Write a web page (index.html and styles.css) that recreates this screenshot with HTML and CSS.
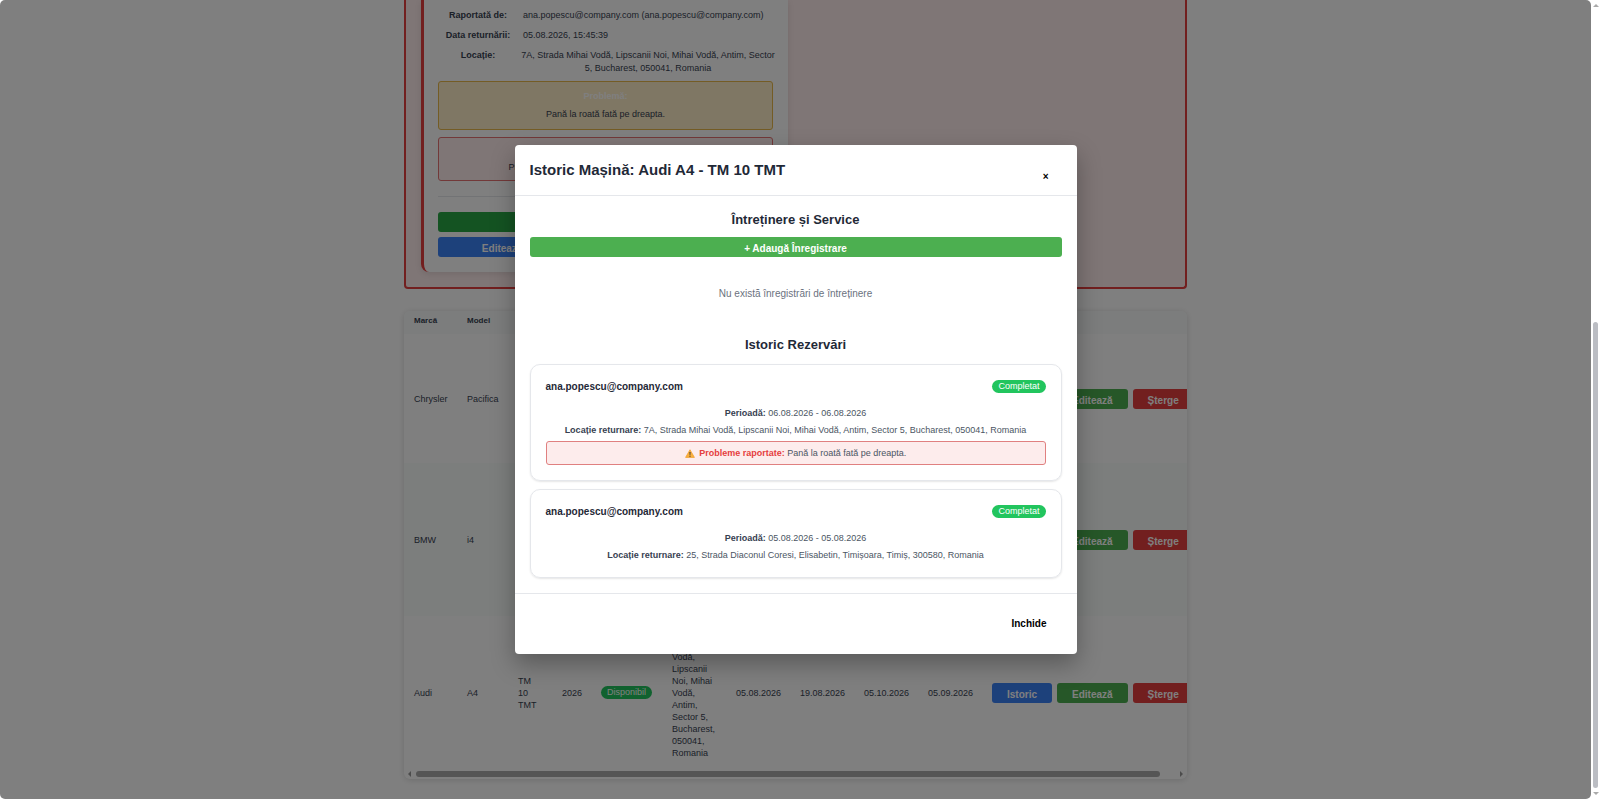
FILE: index.html
```
<!DOCTYPE html>
<html lang="ro">
<head>
    <meta charset="UTF-8">
    <meta name="viewport" content="width=device-width, initial-scale=1.0">
    <title>Istoric Mașină</title>
    <link rel="stylesheet" href="styles.css">
</head>
<body>
    <div class="page">
        <main class="container">
            <section class="problems-section">
                <article class="problem-card">
                    <dl class="problem-details">
                        <dt>Raportată de:</dt>
                        <dd>ana.popescu@company.com (ana.popescu@company.com)</dd>
                        <dt>Data returnării:</dt>
                        <dd>05.08.2026, 15:45:39</dd>
                        <dt>Locație:</dt>
                        <dd class="centered">7A, Strada Mihai Vodă, Lipscanii Noi, Mihai Vodă, Antim, Sector 5, Bucharest, 050041, Romania</dd>
                    </dl>
                    <div class="note note-warning">
                        <strong>Problemă:</strong>
                        <p>Pană la roată fată pe dreapta.</p>
                    </div>
                    <div class="note note-danger">
                        <p>Problemele raportate nu au fost încă soluționate.</p>
                    </div>
                    <div class="problem-actions">
                        <button class="btn btn-success" type="button">Rezolvat</button>
                        <button class="btn btn-primary" type="button">Editează Mașina</button>
                        <button class="btn btn-primary" type="button">Istoric</button>
                    </div>
                </article>
            </section>

            <div class="table-card">
                <div class="table-scroll">
                    <table class="cars-table">
                        <colgroup>
                            <col class="col-brand">
                            <col class="col-model">
                            <col class="col-plate">
                            <col class="col-year">
                            <col class="col-status">
                            <col class="col-location">
                            <col class="col-date">
                            <col class="col-date">
                            <col class="col-date">
                            <col class="col-date">
                            <col class="col-actions">
                        </colgroup>
                        <thead>
                            <tr>
                                <th>Marcă</th>
                                <th>Model</th>
                                <th>Număr</th>
                                <th>An</th>
                                <th>Status</th>
                                <th>Locație</th>
                                <th>Revizie</th>
                                <th>ITP</th>
                                <th>RCA</th>
                                <th></th>
                                <th></th>
                            </tr>
                        </thead>
                        <tbody>
                            <tr class="row-short">
                                <td>Chrysler</td>
                                <td>Pacifica</td>
                                <td></td>
                                <td></td>
                                <td></td>
                                <td></td>
                                <td></td>
                                <td></td>
                                <td></td>
                                <td></td>
                                <td>
                                    <div class="row-actions">
                                        <button class="btn btn-primary" type="button">Istoric</button>
                                        <button class="btn btn-edit" type="button">Editează</button>
                                        <button class="btn btn-danger" type="button">Șterge</button>
                                    </div>
                                </td>
                            </tr>
                            <tr class="row-tall">
                                <td>BMW</td>
                                <td>i4</td>
                                <td></td>
                                <td></td>
                                <td></td>
                                <td></td>
                                <td></td>
                                <td></td>
                                <td></td>
                                <td></td>
                                <td>
                                    <div class="row-actions">
                                        <button class="btn btn-primary" type="button">Istoric</button>
                                        <button class="btn btn-edit" type="button">Editează</button>
                                        <button class="btn btn-danger" type="button">Șterge</button>
                                    </div>
                                </td>
                            </tr>
                            <tr class="row-tall">
                                <td>Audi</td>
                                <td>A4</td>
                                <td>TM 10 TMT</td>
                                <td>2026</td>
                                <td><span class="badge">Disponibil</span></td>
                                <td>7A, Strada Mihai Vodă, Lipscanii Noi, Mihai Vodă, Antim, Sector 5, Bucharest, 050041, Romania</td>
                                <td>05.08.2026</td>
                                <td>19.08.2026</td>
                                <td>05.10.2026</td>
                                <td>05.09.2026</td>
                                <td>
                                    <div class="row-actions">
                                        <button class="btn btn-primary" type="button">Istoric</button>
                                        <button class="btn btn-edit" type="button">Editează</button>
                                        <button class="btn btn-danger" type="button">Șterge</button>
                                    </div>
                                </td>
                            </tr>
                        </tbody>
                    </table>
                </div>
                <div class="hscroll" aria-hidden="true">
                    <span class="arrow arrow-left"></span>
                    <span class="hscroll-track"><span class="hscroll-thumb"></span></span>
                    <span class="arrow arrow-right"></span>
                </div>
            </div>
        </main>

        <div class="modal-overlay">
            <div class="modal" role="dialog" aria-modal="true" aria-labelledby="modal-title">
                <header class="modal-header">
                    <h2 id="modal-title">Istoric Mașină: Audi A4 - TM 10 TMT</h2>
                    <button class="btn btn-close" type="button" aria-label="Inchide">×</button>
                </header>
                <div class="modal-body">
                    <h3>Întreținere și Service</h3>
                    <button class="btn btn-add" type="button">+ Adaugă Înregistrare</button>
                    <p class="empty">Nu există înregistrări de întreținere</p>

                    <h3>Istoric Rezervări</h3>
                    <div class="history-list">
                        <article class="history-card">
                            <div class="history-head">
                                <strong>ana.popescu@company.com</strong>
                                <span class="badge">Completat</span>
                            </div>
                            <p><strong>Perioadă:</strong> 06.08.2026 - 06.08.2026</p>
                            <p><strong>Locație returnare:</strong> 7A, Strada Mihai Vodă, Lipscanii Noi, Mihai Vodă, Antim, Sector 5, Bucharest, 050041, Romania</p>
                            <div class="reported">
                                <svg class="warn-icon" viewBox="0 0 20 18" aria-hidden="true">
                                    <path d="M10 1.5 18.8 16.8H1.2Z" fill="#fbb03b" stroke="#f0a030" stroke-width="1.6" stroke-linejoin="round"/>
                                    <path d="M8.8 6h2.4l-.5 6H9.3Z" fill="#3f3a36"/>
                                    <circle cx="10" cy="14.3" r="1.3" fill="#3f3a36"/>
                                </svg>
                                <strong>Probleme raportate:</strong> Pană la roată fată pe dreapta.
                            </div>
                        </article>
                        <article class="history-card">
                            <div class="history-head">
                                <strong>ana.popescu@company.com</strong>
                                <span class="badge">Completat</span>
                            </div>
                            <p><strong>Perioadă:</strong> 05.08.2026 - 05.08.2026</p>
                            <p><strong>Locație returnare:</strong> 25, Strada Diaconul Coresi, Elisabetin, Timișoara, Timiș, 300580, Romania</p>
                        </article>
                    </div>
                </div>
                <footer class="modal-footer">
                    <button class="btn btn-ghost" type="button">Inchide</button>
                </footer>
            </div>
        </div>
    </div>

    <div class="vscroll" aria-hidden="true">
        <span class="arrow arrow-up"></span>
        <span class="vscroll-track"><span class="vscroll-thumb"></span></span>
        <span class="arrow arrow-down"></span>
    </div>
</body>
</html>
```
FILE: styles.css
```
* {
    margin: 0;
    padding: 0;
    box-sizing: border-box;
}

body {
    display: flex;
    height: 100vh;
    overflow: hidden;
    font-family: "Liberation Sans", Arial, sans-serif;
    font-size: 9px;
    line-height: 13px;
    color: #374151;
    background: #fff;
}

.page {
    position: relative;
    flex: 1;
    min-width: 0;
    overflow: hidden;
}

.container {
    width: 100%;
    max-width: 783px;
    margin: 0 auto;
}

/* Buttons */
.btn {
    height: 20px;
    padding: 4px 15px 0;
    border: none;
    border-radius: 3px;
    font-family: inherit;
    font-size: 10px;
    font-weight: bold;
    line-height: 16px;
    color: #fff;
    background: none;
    cursor: pointer;
}

.btn-primary {
    background: #3b82f6;
}

.btn-success {
    background: #28a745;
}

.btn-edit,
.btn-add {
    background: #4caf50;
}

.btn-danger {
    background: #e53e3e;
}

.badge {
    display: inline-block;
    padding: 0 6px;
    border-radius: 7px;
    line-height: 13px;
    color: #fff;
    background: #22c55e;
}

/* Reported problems */
.problems-section {
    display: grid;
    grid-template-columns: 367px 1fr;
    padding: 0 15px 15px;
    border: 2px solid #e53e3e;
    border-top: none;
    border-radius: 0 0 4px 4px;
    background: #feecec;
}

.problem-card {
    padding: 9px 15px 15px 14px;
    border-left: 3px solid #e53e3e;
    border-radius: 0 0 8px 8px;
    background: #fff;
    box-shadow: 0 2px 6px rgba(0, 0, 0, 0.1);
}

.problem-details {
    display: grid;
    grid-template-columns: 80px 250px;
    justify-content: space-between;
    row-gap: 7px;
    margin-bottom: 6px;
}

.problem-details dt {
    font-weight: bold;
    text-align: center;
}

.problem-details .centered {
    margin: 0 -4px;
    text-align: center;
}

.note {
    padding: 8px;
    border: 1px solid;
    border-radius: 3px;
    text-align: center;
}

.note-warning {
    margin-bottom: 7px;
    border-color: #e8b84a;
    background: #ffeec8;
}

.note-warning strong {
    display: block;
    margin-bottom: 5px;
    color: #fff;
}

.note-danger {
    padding: 23px 8px 6px;
    border-color: #e57373;
    background: #feecec;
}

.problem-actions {
    display: grid;
    grid-template-columns: 1fr 1fr;
    gap: 5px;
    margin-top: 15px;
    padding-top: 15px;
    border-top: 1px solid #e5e7eb;
}

.problem-actions .btn-success {
    grid-column: 1 / -1;
}

/* Cars table */
.table-card {
    margin-top: 22px;
    border-radius: 6px;
    overflow: hidden;
    background: #fff;
    box-shadow: 0 1px 6px rgba(0, 0, 0, 0.15);
}

.table-scroll {
    overflow: hidden;
}

.cars-table {
    width: 100%;
    min-width: 801px;
    table-layout: fixed;
    border-collapse: collapse;
    line-height: 12px;
    text-align: left;
}

.cars-table th,
.cars-table td {
    padding: 0 10px;
    vertical-align: middle;
}

.cars-table th {
    height: 23px;
    padding-bottom: 3px;
    font-size: 8px;
    background: #f8fbfa;
}

.cars-table tbody tr:nth-child(even) {
    background: #f9fcfb;
}

.col-brand { width: 53px; }
.col-model { width: 51px; }
.col-plate { width: 44px; }
.col-year { width: 39px; }
.col-status { width: 71px; }
.col-location { width: 64px; }
.col-date { width: 64px; }
.col-actions { width: 223px; }

.row-short {
    height: 129px;
}

.row-tall {
    height: 153px;
}

.row-actions {
    display: flex;
    gap: 5px;
}

/* Scrollbars */
.hscroll,
.vscroll {
    display: flex;
    align-items: center;
}

.hscroll {
    gap: 5px;
    height: 10px;
    padding: 0 4px;
}

.hscroll-track,
.vscroll-track {
    flex: 1;
}

.hscroll-thumb {
    display: block;
    width: 98%;
    height: 6px;
    border-radius: 3px;
    background: #ababab;
}

.vscroll {
    flex-direction: column;
    flex: 0 0 9px;
    gap: 4px;
    padding: 4px 0;
}

.vscroll-track {
    display: flex;
    align-items: flex-end;
}

.vscroll-thumb {
    width: 5px;
    height: 60%;
    border-radius: 3px;
    background: #bbbdc3;
}

.arrow {
    border: 3px solid transparent;
}

.arrow-left {
    border-left: none;
    border-right-color: #999;
}

.arrow-right {
    border-right: none;
    border-left-color: #999;
}

.arrow-up {
    border-top: none;
    border-bottom-color: #aaa;
}

.arrow-down {
    border-bottom: none;
    border-top-color: #aaa;
}

/* Modal */
.modal-overlay {
    position: absolute;
    inset: 0;
    display: flex;
    align-items: center;
    justify-content: center;
    border-radius: 5px;
    background: rgba(0, 0, 0, 0.5);
}

.modal {
    width: 90%;
    max-width: 562px;
    border-radius: 4px;
    background: #fff;
    box-shadow: 0 10px 25px rgba(0, 0, 0, 0.3);
}

.modal-header {
    display: flex;
    justify-content: space-between;
    padding: 10px 15px;
    border-bottom: 1px solid #e5e7eb;
}

.modal-header h2 {
    font-size: 15px;
    line-height: 30px;
    color: #1f2937;
}

.btn-close {
    height: 30px;
    padding: 14px 13px 0;
    color: #000;
}

.modal-body {
    padding: 16px 15px 15px;
    text-align: center;
}

.modal-body h3 {
    margin-bottom: 9px;
    font-size: 13px;
    line-height: 16px;
    color: #1f2937;
}

.btn-add {
    display: block;
    width: 100%;
}

.empty {
    padding: 30px 0 37px;
    font-size: 10px;
    color: #6b7280;
}

.history-list {
    display: grid;
    gap: 8px;
    padding-top: 2px;
}

.history-card {
    padding: 15px;
    border: 1px solid #e5e7eb;
    border-radius: 10px;
    color: #4b5563;
    box-shadow: 0 1px 2px rgba(0, 0, 0, 0.1);
}

.history-head {
    display: flex;
    align-items: center;
    justify-content: space-between;
    margin-bottom: 14px;
}

.history-head strong {
    font-size: 10px;
    color: #1f2937;
}

.history-card p {
    margin-bottom: 4px;
}

.history-card p:last-child {
    margin-bottom: 0;
}

.history-card p strong {
    color: #374151;
}

.reported {
    padding: 5px;
    border: 1px solid #e08080;
    border-radius: 3px;
    line-height: 12px;
    background: #fdecec;
}

.history-card .reported strong {
    color: #e53e3e;
}

.warn-icon {
    width: 10px;
    height: 9px;
    margin-right: 2px;
    vertical-align: -2px;
}

.modal-footer {
    display: flex;
    justify-content: flex-end;
    padding: 15px;
    border-top: 1px solid #e5e7eb;
}

.btn-ghost {
    height: 30px;
    padding: 0 15px;
    color: #000;
}
```
